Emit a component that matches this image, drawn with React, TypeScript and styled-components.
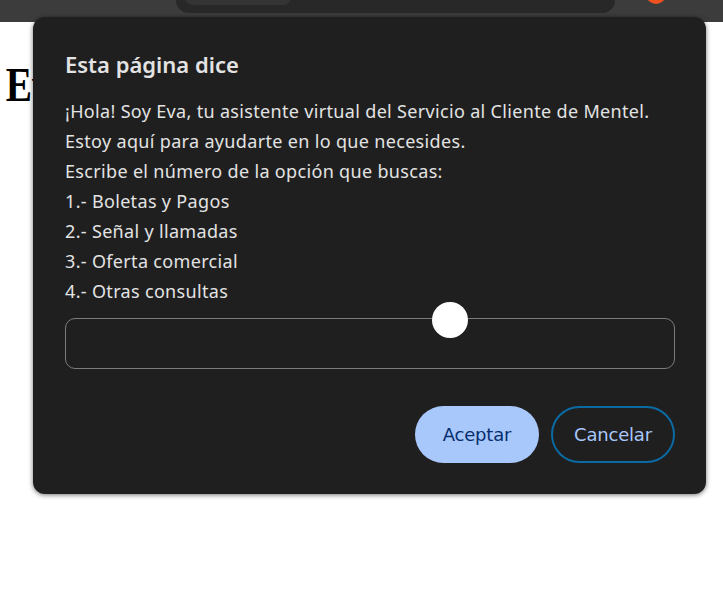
import React from "react";
import styled, { createGlobalStyle } from "styled-components";

const Global = createGlobalStyle`
  html, body { margin: 0; padding: 0; background: #ffffff; }
  body { width: 723px; height: 612px; overflow: hidden; position: relative; }
`;

const Page = styled.div`
  position: relative;
  width: 723px;
  height: 612px;
  background: #ffffff;
`;

const TopBar = styled.div`
  height: 22px;
  background: #3c3c3c;
  position: relative;
`;

const Omnibox = styled.div`
  position: absolute;
  left: 176px;
  top: -12px;
  width: 439px;
  height: 25px;
  border-radius: 13px;
  background: #282828;
`;

const Chip = styled.div`
  position: absolute;
  left: 9px;
  top: 0;
  width: 106px;
  height: 17px;
  border-radius: 8px;
  background: #343434;
`;

const Dot = styled.div`
  position: absolute;
  left: 646px;
  top: -16px;
  width: 20px;
  height: 20px;
  border-radius: 50%;
  background: #f1501f;
`;

const Heading = styled.h1`
  margin: 0;
  padding: 39px 0 0 7px;
  font-family: "Liberation Serif", "DejaVu Serif", serif;
  font-weight: 700;
  font-size: 48px;
  line-height: 1;
  color: #000;
  transform: scaleX(0.82);
  transform-origin: left;
`;

const Dialog = styled.div`
  position: absolute;
  left: 33px;
  top: 17px;
  width: 673px;
  box-sizing: border-box;
  padding: 32px 31px 31px 32px;
  background: #1f1f1f;
  border-radius: 12px;
  box-shadow: 0 1px 5px rgba(0, 0, 0, 0.55);
  display: flex;
  flex-direction: column;
  font-family: "Noto Sans", "Open Sans", sans-serif;
  color: #e3e3e3;
`;

const Title = styled.div`
  font-size: 22px;
  font-weight: 600;
  line-height: 30px;
  letter-spacing: 0;
  color: #e3e3e3;
`;

const Message = styled.div`
  margin-top: 17px;
  font-size: 18px;
  line-height: 30px;
  white-space: pre-line;
  letter-spacing: 0.33px;
`;

const Input = styled.div`
  margin-top: 12px;
  height: 51px;
  box-sizing: border-box;
  border: 1px solid #7c7c7c;
  border-radius: 10px;
`;

const Thumb = styled.div`
  position: absolute;
  left: 399px;
  top: 285px;
  width: 36px;
  height: 36px;
  border-radius: 50%;
  background: #ffffff;
`;

const Actions = styled.div`
  margin-top: 37px;
  display: flex;
  justify-content: flex-end;
  gap: 12px;
`;

const Button = styled.div<{ $primary?: boolean }>`
  width: 124px;
  height: 57px;
  box-sizing: border-box;
  border-radius: 29px;
  display: flex;
  align-items: center;
  justify-content: center;
  font-size: 18px;
  font-family: "DejaVu Sans", "Noto Sans", sans-serif;
  font-weight: ${(p) => (p.$primary ? 500 : 400)};
  letter-spacing: -0.2px;
  background: ${(p) => (p.$primary ? "#a8c7fa" : "transparent")};
  color: ${(p) => (p.$primary ? "#062e6f" : "#a8c7fa")};
  border: ${(p) => (p.$primary ? "none" : "2px solid #0b6aa3")};
`;

const text = `¡Hola! Soy Eva, tu asistente virtual del Servicio al Cliente de Mentel.
Estoy aquí para ayudarte en lo que necesides.
Escribe el número de la opción que buscas:
1.- Boletas y Pagos
2.- Señal y llamadas
3.- Oferta comercial
4.- Otras consultas`;

export default function App() {
  return (
    <Page>
      <Global />
      <TopBar>
        <Omnibox>
          <Chip />
        </Omnibox>
        <Dot />
      </TopBar>
      <Heading>Eva</Heading>
      <Dialog>
        <Title>Esta página dice</Title>
        <Message>{text}</Message>
        <Input />
        <Actions>
          <Button $primary>Aceptar</Button>
          <Button>Cancelar</Button>
        </Actions>
        <Thumb />
      </Dialog>
    </Page>
  );
}
